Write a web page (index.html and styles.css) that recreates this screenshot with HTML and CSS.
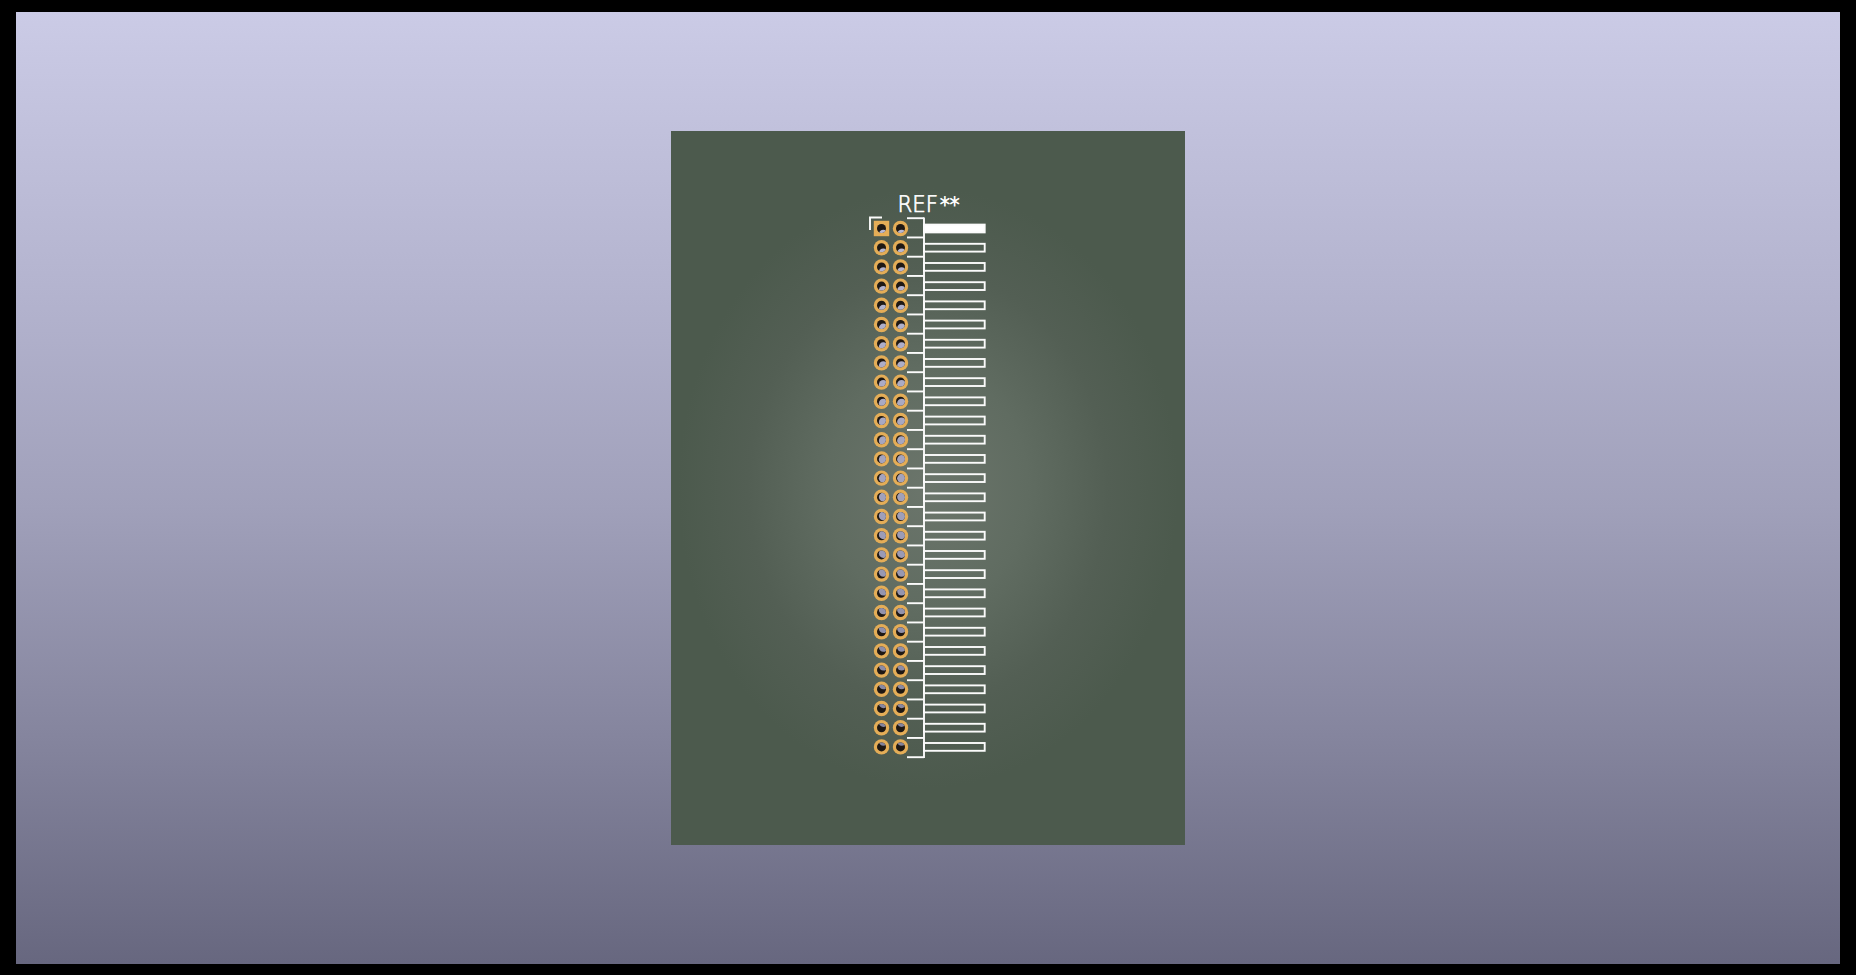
FILE: index.html
```html
<!DOCTYPE html>
<html lang="en">
  <head>
    <meta charset="UTF-8" />
    <title>3D Viewer</title>
    <link rel="stylesheet" href="styles.css">
  </head>
  <body>
    <div class="viewer">
      <div class="board">
        <svg class="board__art" viewBox="671 131 514 714" xmlns="http://www.w3.org/2000/svg">
          <g id="pads"></g>
          <g id="silk"></g>
          <text class="board__ref" x="897.5" y="212" textLength="62" lengthAdjust="spacingAndGlyphs">REF<tspan class="board__stars" dx="2">**</tspan></text>
        </svg>
      </div>
    </div>
    <script src="script.js"></script>
  </body>
</html>
```

FILE: styles.css
```css
* {
  box-sizing: border-box;
  margin: 0;
  padding: 0;
}
html,
body {
  height: 100%;
}
body {
  display: flex;
  background-color: #000;
  padding: 12px 16px 11px;
}
.viewer {
  flex: 1;
  display: flex;
  align-items: center;
  justify-content: center;
  background: linear-gradient(#cbcbe6 0%, #b3b3ce 30%, #a0a0ba 52%, #85859e 76%, #67677f 100%);
}
.board {
  width: 514px;
  height: 714px;
  background: radial-gradient(ellipse 250px 300px at 50% 50%, #6b756b 0%, #606c61 40%, #535f54 72%, #4c5a4d 100%);
}
.board__art {
  display: block;
  width: 100%;
  height: 100%;
}
.board__ref {
  fill: #fff;
  stroke: #fff;
  stroke-width: 0.7;
  font-family: "DejaVu Sans", sans-serif;
  font-size: 23px;
  font-weight: 200;
  text-rendering: geometricPrecision;
}
.board__stars {
  font-size: 21px;
  stroke-width: 1;
}
.silk {
  fill: none;
  stroke: #fbfbfb;
  stroke-width: 1.9;
}
.silk--fill {
  fill: #fff;
}
.pad {
  fill: #e4ad57;
}
.pad__hole {
  fill: #1e1814;
}
```

FILE: script.js
```js
const NS = 'http://www.w3.org/2000/svg'
const ROWS = 28
const PITCH = 19.2
const TOP = 228.5
const COLS = [881.5, 900.5]
const HOLE = 4.5
const CX = 928
const CY = 488

const pads = document.getElementById('pads')
const silk = document.getElementById('silk')

const el = (parent, tag, attrs) => {
  const node = document.createElementNS(NS, tag)
  for (const k in attrs) node.setAttribute(k, attrs[k])
  parent.appendChild(node)
  return node
}

// colour of the backdrop gradient seen through a drill hole
const backdrop = y => {
  const t = (y - 12) / 952
  const v = t < 0.52 ? 203 - 43 * (t / 0.52) : 160 - 57 * ((t - 0.52) / 0.48)
  const b = t < 0.52 ? 230 - 44 * (t / 0.52) : 186 - 59 * ((t - 0.52) / 0.48)
  return `rgb(${Math.round(v)},${Math.round(v)},${Math.round(b)})`
}

for (let row = 0; row < ROWS; row++) {
  const y = TOP + row * PITCH
  COLS.forEach((x, col) => {
    if (row === 0 && col === 0) {
      el(pads, 'rect', { class: 'pad', x: x - 7.7, y: y - 7.7, width: 15.4, height: 15.4 })
    } else {
      el(pads, 'circle', { class: 'pad', cx: x, cy: y, r: 7.7 })
    }
    el(pads, 'circle', { class: 'pad__hole', cx: x, cy: y, r: HOLE })
    const clip = `hole-${row}-${col}`
    const cp = el(pads, 'clipPath', { id: clip })
    el(cp, 'circle', { cx: x, cy: y, r: HOLE })
    el(pads, 'circle', {
      'clip-path': `url(#${clip})`,
      cx: x + (CX - x) * 0.04,
      cy: y + (CY - y) * 0.022,
      r: HOLE,
      fill: backdrop(y)
    })
  })

  // pin on the right of the connector body
  el(silk, 'rect', {
    class: row === 0 ? 'silk silk--fill' : 'silk',
    x: 924,
    y: y - 3.9,
    width: 60.7,
    height: 7.8
  })
}

// body edge with a stub at every pitch
for (let i = 0; i <= ROWS; i++) {
  const y = 218.2 + i * 19.25
  el(silk, 'path', { class: 'silk', d: `M907 ${y}H924` })
}
el(silk, 'path', { class: 'silk', d: 'M924 217.5V758' })
// pin 1 marker
el(silk, 'path', { class: 'silk', d: 'M870 230V217.5H882' })
```
